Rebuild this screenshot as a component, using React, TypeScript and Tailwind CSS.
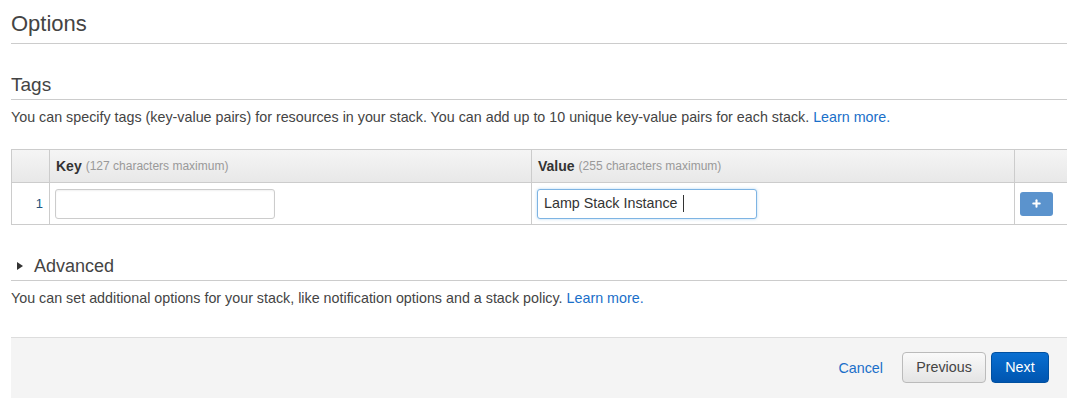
import { Plus } from "lucide-react"

const font = { fontFamily: '"Liberation Sans", Arial, sans-serif' }

function SectionTitle({ children, size }: { children: React.ReactNode; size: string }) {
  return <h2 className={`${size} text-[#444] font-normal border-b border-[#ccc]`}>{children}</h2>
}

export default function App() {
  return (
    <div className="w-[1067px] h-[398px] overflow-hidden bg-white text-[#444]" style={font}>
      <div className="pl-[11px]">
        {/* Options */}
        <h1 className="pt-[12px] pb-[7px] text-[22px] leading-[24px] text-[#444] border-b border-[#ccc]">Options</h1>

        {/* Tags */}
        <div className="mt-[30px]">
          <SectionTitle size="text-[19px] leading-[22px] pb-[3px]">Tags</SectionTitle>
          <p className="mt-[8px] text-[14.3px] leading-[18px] text-[#444]">
            You can specify tags (key-value pairs) for resources in your stack. You can add up to 10 unique key-value pairs for each stack.{" "}
            <a className="text-[#1a6fc9]">Learn more.</a>
          </p>
        </div>

        {/* tag table */}
        <div className="mt-[23px] border-t border-l border-b border-[#ccc]">
          <div className="grid grid-cols-[38px_482px_483px_1fr] h-[33px] bg-gradient-to-b from-[#f5f5f5] to-[#e8e8e8] border-b border-[#ccc]">
            <div className="border-r border-[#ccc]" />
            <div className="border-r border-[#ccc] flex items-center pl-[6px] text-[14px]">
              <span className="font-bold text-[#333]">Key</span>
              <span className="ml-[4px] text-[12px] text-[#999]">(127 characters maximum)</span>
            </div>
            <div className="border-r border-[#ccc] flex items-center pl-[6px] text-[14px]">
              <span className="font-bold text-[#333]">Value</span>
              <span className="ml-[4px] text-[12px] text-[#999]">(255 characters maximum)</span>
            </div>
            <div />
          </div>
          <div className="grid grid-cols-[38px_482px_483px_1fr] h-[41px]">
            <div className="border-r border-[#ccc] flex items-center justify-end pr-[6px] text-[13px] text-[#23527c]">1</div>
            <div className="border-r border-[#ccc] flex items-center pl-[5px]">
              <div className="w-[220px] h-[30px] border border-[#ccc] rounded-[3px] bg-white shadow-[inset_0_1px_2px_rgba(0,0,0,0.06)]" />
            </div>
            <div className="border-r border-[#ccc] flex items-center pl-[5px]">
              <div className="w-[220px] h-[30px] border border-[#7eb4e3] rounded-[3px] bg-white flex items-center pl-[6px] text-[14.3px] text-[#333] shadow-[0_0_3px_rgba(102,175,233,0.5)]">
                <span>Lamp Stack Instance</span>
                <span className="ml-[5px] w-px h-[17px] bg-[#333]" />
              </div>
            </div>
            <div className="flex items-center pl-[5px]">
              <button className="w-[33px] h-[24px] rounded-[3px] bg-[#5b93cd] flex items-center justify-center">
                <Plus className="w-[11px] h-[11px] text-white" strokeWidth={4.5} />
              </button>
            </div>
          </div>
        </div>

        {/* Advanced */}
        <div className="mt-[30px]">
          <h2 className="flex items-center text-[18px] leading-[22px] pb-[3px] border-b border-[#ccc] text-[#444]">
            <span className="ml-[6px] mr-[11px] w-0 h-0 border-y-[4px] border-y-transparent border-l-[6px] border-l-[#333]" />
            Advanced
          </h2>
          <p className="mt-[8px] text-[14.3px] leading-[18px]">
            You can set additional options for your stack, like notification options and a stack policy.{" "}
            <a className="text-[#1a6fc9]">Learn more.</a>
          </p>
        </div>

        {/* footer */}
        <div className="mt-[30px] h-[70px] bg-[#f4f4f4] border-t border-[#ddd] flex items-start justify-end pt-[14px] pr-[18px]">
          <a className="mt-[6px] mr-[19px] text-[14.3px] text-[#1a6fc9]">Cancel</a>
          <button className="w-[84px] h-[31px] rounded-[4px] border border-[#bbb] bg-gradient-to-b from-[#fafafa] to-[#e4e4e4] text-[14.3px] text-[#444]">
            Previous
          </button>
          <button className="ml-[5px] w-[58px] h-[31px] rounded-[4px] border border-[#0050a0] bg-gradient-to-b from-[#0a6fd1] to-[#0055b0] text-[14.3px] text-white">
            Next
          </button>
        </div>
      </div>
    </div>
  )
}
